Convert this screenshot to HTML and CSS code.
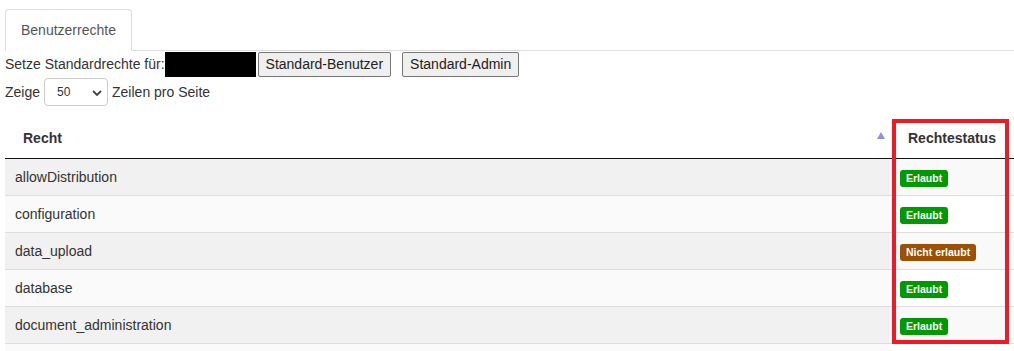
FILE: index.html
```html
<!DOCTYPE html>
<html lang="de">
<head>
  <meta charset="UTF-8">
  <meta name="viewport" content="width=device-width, initial-scale=1.0">
  <title>Benutzerrechte</title>
  <link rel="stylesheet" href="styles.css">
</head>
<body>

  <!-- Reiter -->
  <ul class="tabs">
    <li class="tab active">Benutzerrechte</li>
  </ul>

  <div class="toolbar">
    <span>Setze Standardrechte für:</span>
    <span class="redacted"></span>
    <button type="button" class="btn">Standard-Benutzer</button>
    <button type="button" class="btn btn-admin">Standard-Admin</button>
  </div>

  <div class="length">
    <span>Zeige</span>
    <div class="select-wrap">
      <select name="length">
        <option>10</option>
        <option>25</option>
        <option selected>50</option>
        <option>100</option>
      </select>
      <svg class="chevron" width="10" height="6" viewBox="0 0 10 6">
        <path d="M1 1 L5 5 L9 1" fill="none" stroke="#444" stroke-width="1.8"/>
      </svg>
    </div>
    <span>Zeilen pro Seite</span>
  </div>

  <!-- Tabelle der Rechte -->
  <div class="table-wrap">
    <table class="rights">
      <thead>
        <tr>
          <th class="sorted">
            <div class="th-inner">
              <span>Recht</span>
              <span class="sort-asc"></span>
            </div>
          </th>
          <th class="status">Rechtestatus</th>
        </tr>
      </thead>
      <tbody>
        <tr>
          <td class="sorting_1">allowDistribution</td>
          <td><span class="label label-ok">Erlaubt</span></td>
        </tr>
        <tr>
          <td class="sorting_1">configuration</td>
          <td><span class="label label-ok">Erlaubt</span></td>
        </tr>
        <tr>
          <td class="sorting_1">data_upload</td>
          <td><span class="label label-no">Nicht erlaubt</span></td>
        </tr>
        <tr>
          <td class="sorting_1">database</td>
          <td><span class="label label-ok">Erlaubt</span></td>
        </tr>
        <tr>
          <td class="sorting_1">document_administration</td>
          <td><span class="label label-ok">Erlaubt</span></td>
        </tr>
        <tr>
          <td class="sorting_1">&nbsp;</td>
          <td>&nbsp;</td>
        </tr>
      </tbody>
    </table>

    <!-- Markierung -->
    <div class="highlight"></div>
  </div>

</body>
</html>
```

FILE: styles.css
```css
/* Allgemein */
body {
  margin: 0;
  padding: 0 0 0 5px;
  font-family: "Liberation Sans", Arial, sans-serif;
  font-size: 14px;
  line-height: 20px;
  color: #333;
  background: #fff;
  overflow: hidden;
}

/* Reiter */
.tabs {
  list-style: none;
  margin: 9px 0 0 0;
  padding: 0;
  display: flex;
  border-bottom: 1px solid #ddd;
}

.tab {
  padding: 10px 15px;
  margin-bottom: -1px;
  color: #555;
  border: 1px solid transparent;
  border-radius: 4px 4px 0 0;
}

.tab.active {
  background: #fff;
  border-color: #ddd;
  border-bottom-color: transparent;
}

/* Standardrechte */
.toolbar {
  display: flex;
  align-items: center;
  height: 26px;
}

.redacted {
  display: inline-block;
  width: 91px;
  height: 25px;
  margin-top: 1px;
  background: #000;
}

.btn {
  height: 25px;
  margin-left: 2px;
  padding: 0 7px;
  font-family: inherit;
  font-size: 14px;
  color: #222;
  background: #efefef;
  border: 1px solid #767676;
  border-radius: 2px;
}

.btn-admin {
  margin-left: 11px;
}

/* Zeilen pro Seite */
.length {
  display: flex;
  align-items: center;
  gap: 4px;
  height: 29px;
}

.select-wrap {
  position: relative;
  width: 64px;
  height: 28px;
}

.select-wrap select {
  appearance: none;
  -webkit-appearance: none;
  width: 100%;
  height: 100%;
  padding: 0 0 0 12px;
  font-family: inherit;
  font-size: 12px;
  color: #333;
  background: #fff;
  border: 1px solid #ccc;
  border-radius: 4px;
}

.chevron {
  position: absolute;
  top: 12px;
  right: 6px;
  pointer-events: none;
}

/* Tabelle */
.table-wrap {
  position: relative;
  margin-top: 12px;
}

.rights {
  width: 100%;
  border-collapse: collapse;
}

.rights th {
  padding: 10px 18px;
  text-align: left;
  font-weight: bold;
  border-bottom: 1px solid #111;
}

.rights th.sorted {
  padding-right: 5px;
}

.th-inner {
  display: flex;
  align-items: center;
  justify-content: space-between;
}

.sort-asc {
  width: 0;
  height: 0;
  border-left: 4px solid transparent;
  border-right: 4px solid transparent;
  border-bottom: 7px solid #9090dd;
  margin-top: -6px;
}

.rights th.status {
  width: 88px;
}

.rights td {
  padding: 8px 10px;
  border-top: 1px solid #ddd;
  white-space: nowrap;
}

.rights tbody tr:first-child td {
  border-top: none;
}

.rights tbody tr:nth-child(odd) {
  background: #f9f9f9;
}

.rights tbody tr:nth-child(odd) td.sorting_1 {
  background: #f1f1f1;
}

.rights tbody tr:nth-child(even) td.sorting_1 {
  background: #fafafa;
}

/* Status-Labels */
.label {
  display: inline-block;
  padding: 2px 6px 3px;
  font-size: 10.5px;
  font-weight: bold;
  line-height: 12px;
  color: #fff;
  border-radius: 3px;
  vertical-align: middle;
}

.label-ok {
  background: #009a00;
}

.label-no {
  background: #9c5000;
}

/* Rote Markierung */
.highlight {
  position: absolute;
  top: 1px;
  left: 887px;
  right: 5px;
  height: 217px;
  border: 4px solid #ed1c24;
  pointer-events: none;
}
```
